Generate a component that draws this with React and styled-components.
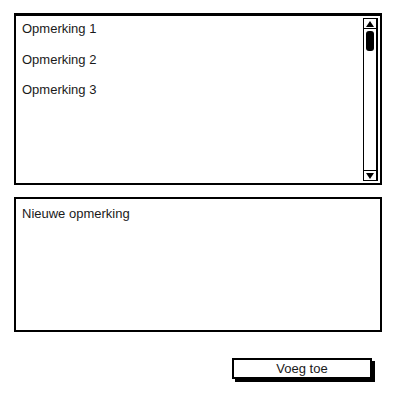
import React from 'react';
import styled, { createGlobalStyle } from 'styled-components';

const GlobalStyle = createGlobalStyle`
  html, body {
    margin: 0;
    padding: 0;
    background: #ffffff;
  }
  body {
    font-family: "Liberation Sans", Arial, sans-serif;
    color: #1a1a1a;
  }
`;

const Page = styled.div`
  width: 400px;
  height: 400px;
  box-sizing: border-box;
  padding: 13px 18px 0 14px;
  display: flex;
  flex-direction: column;
`;

const ListBox = styled.div`
  height: 172px;
  box-sizing: border-box;
  border: 2px solid #000;
  border-top-width: 3px;
  display: flex;
`;

const ListItems = styled.div`
  flex: 1;
  padding: 3px 0 0 6px;
  display: flex;
  flex-direction: column;
`;

const Item = styled.div`
  height: 30.5px;
  line-height: 20px;
  font-size: 13px;
`;

const ScrollBar = styled.div`
  width: 15px;
  margin: 2px 2px 2px 0;
  box-sizing: border-box;
  border: 1px solid #000;
  border-right-width: 2px;
  display: flex;
  flex-direction: column;
`;

const Arrow = styled.div`
  height: 9px;
  display: flex;
  align-items: center;
  justify-content: center;
  border-${(p) => (p.$down ? 'top' : 'bottom')}: 1px solid #000;
`;

const Track = styled.div`
  flex: 1;
  padding: 2px 2px 0 2px;
`;

const Thumb = styled.div`
  height: 20px;
  background: #000;
  border-radius: 3px;
`;

const NoteBox = styled.div`
  margin-top: 12px;
  height: 135px;
  box-sizing: border-box;
  border: 2px solid #000;
  padding: 7px 6px;
  font-size: 13px;
  line-height: 16px;
`;

const Actions = styled.div`
  margin-top: 26px;
  display: flex;
  justify-content: flex-end;
  padding-right: 10px;
`;

const AddButton = styled.button`
  width: 140px;
  height: 21px;
  box-sizing: border-box;
  border: 2px solid #000;
  background: #fff;
  box-shadow: 3px 3px 0 #000;
  font-family: "Liberation Sans", Arial, sans-serif;
  font-size: 13px;
  color: #1a1a1a;
  padding: 0;
`;

const Triangle = ({ down }) => (
  <svg width="8" height="6" viewBox="0 0 8 6">
    <polygon points={down ? '0,0 8,0 4,6' : '4,0 8,6 0,6'} fill="#000" />
  </svg>
);

const App = () => (
  <Page>
    <GlobalStyle />
    <ListBox>
      <ListItems>
        <Item>Opmerking 1</Item>
        <Item>Opmerking 2</Item>
        <Item>Opmerking 3</Item>
      </ListItems>
      <ScrollBar>
        <Arrow>
          <Triangle />
        </Arrow>
        <Track>
          <Thumb />
        </Track>
        <Arrow $down>
          <Triangle down />
        </Arrow>
      </ScrollBar>
    </ListBox>
    <NoteBox>Nieuwe opmerking</NoteBox>
    <Actions>
      <AddButton type="button">Voeg toe</AddButton>
    </Actions>
  </Page>
);

export default App;
